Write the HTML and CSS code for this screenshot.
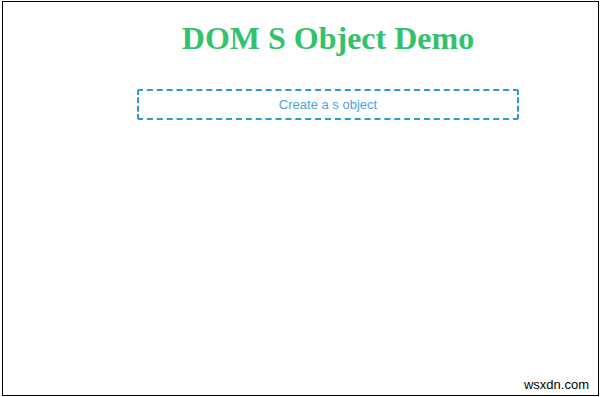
FILE: index.html
```html
<!DOCTYPE html>
<html lang="en">
<head>
<meta charset="UTF-8">
<title>DOM S Object Demo</title>
<link rel="stylesheet" href="styles.css">
</head>
<body>
<div class="frame">
  <div class="content">
    <h1 class="title">DOM S Object Demo</h1>
    <button class="btn-create">Create a s object</button>
  </div>
  <div class="watermark">wsxdn.com</div>
</div>
</body>
</html>
```

FILE: styles.css
```css
*{margin:0;padding:0;box-sizing:border-box;}
html,body{height:100%;}
body{background:#fff;padding:1px 1px 1px 2px;}
.frame{position:relative;height:100%;border:1px solid #000;background:#fff;}
.content{display:flex;flex-direction:column;align-items:center;padding:18px 0 0 55px;}
.title{font-family:"Liberation Serif","Times New Roman",serif;font-size:32px;font-weight:bold;color:#33c26b;line-height:37px;}
.btn-create{margin-top:32px;width:382px;height:31px;background:#fff;border:2px dashed #2f9ad0;border-radius:2px;font-family:"Liberation Sans",Arial,sans-serif;font-size:13px;color:#4aa6d8;cursor:pointer;}
.watermark{position:absolute;right:7px;bottom:3px;background:#fff;padding:0 2px;font-family:"Liberation Sans",Arial,sans-serif;font-size:13px;color:#000;}
```
